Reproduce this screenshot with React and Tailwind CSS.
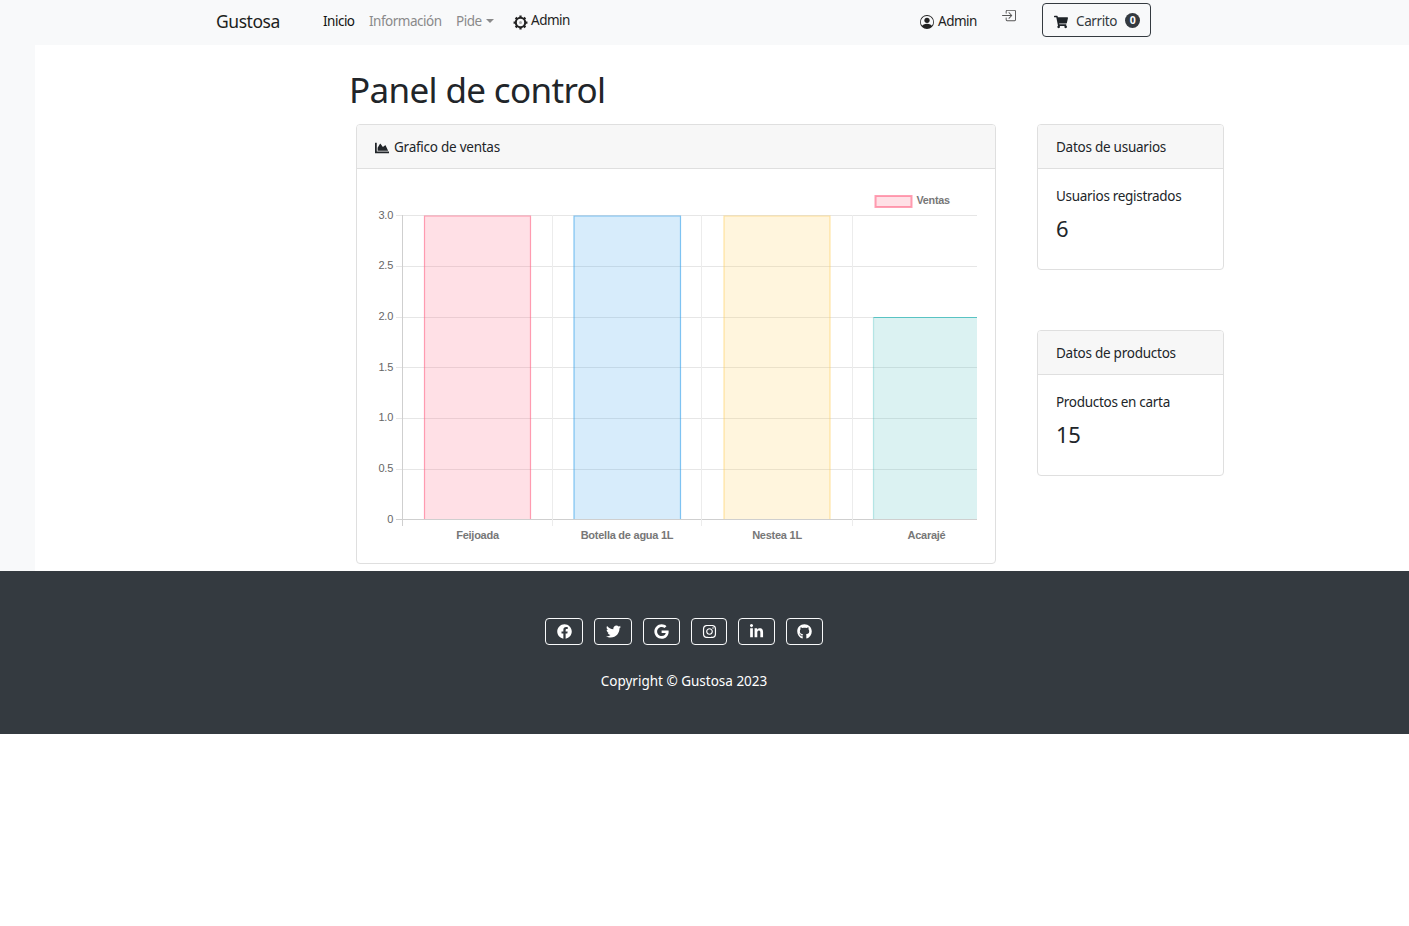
import { FaChartArea, FaShoppingCart, FaFacebook, FaTwitter, FaGoogle, FaInstagram, FaLinkedinIn, FaGithub } from 'react-icons/fa';
import { BsBoxArrowInRight, BsPersonCircle } from 'react-icons/bs';

const bars = [
  { x: 424.5, y: 216, h: 303, w: 106, fill: 'rgba(255,99,132,0.2)', line: 'rgba(255,99,132,0.6)', label: 'Feijoada', lx: 477.5 },
  { x: 574, y: 216, h: 303, w: 106.5, fill: 'rgba(54,162,235,0.2)', line: 'rgba(54,162,235,0.6)', label: 'Botella de agua 1L', lx: 627 },
  { x: 724, y: 216, h: 303, w: 106, fill: 'rgba(255,206,86,0.2)', line: 'rgba(255,206,86,0.5)', label: 'Nestea 1L', lx: 777 },
  { x: 873.5, y: 317.5, h: 201.5, w: 103.5, fill: 'rgba(75,192,192,0.2)', line: 'rgba(75,192,192,0.35)', top: 'rgba(75,192,192,0.9)', label: 'Acarajé', lx: 926.5 },
];

const yTicks = [
  { label: '3.0', y: 215.5, ty: 219 },
  { label: '2.5', y: 266.5, ty: 269 },
  { label: '2.0', y: 317.5, ty: 320 },
  { label: '1.5', y: 367.5, ty: 371 },
  { label: '1.0', y: 418.5, ty: 421 },
  { label: '0.5', y: 469.5, ty: 472 },
  { label: '0', y: 519.5, ty: 523 },
];

const xGrid = [552.5, 701.5, 852.5];

const chartFont = 'Liberation Sans, sans-serif';

// Coordinates in the chart are offset by the card body origin (357, 169)
const SalesChart = () => (
  <svg width="638" height="394" viewBox="357 169 638 394" className="block">
    <rect x="875.5" y="196" width="36" height="11" fill="rgba(255,99,132,0.2)" stroke="rgba(255,99,132,0.6)" strokeWidth="2" />
    <text x="916.5" y="204" fontSize="10.8" fontWeight="700" fill="#777" fontFamily={chartFont}>Ventas</text>

    {yTicks.map(t => (
      <g key={t.label}>
        <line x1="396" x2="977" y1={t.y} y2={t.y} stroke={t.label === '0' ? '#cfcfcf' : '#e6e6e6'} />
        <text x="393" y={t.ty} textAnchor="end" fontSize="11" fill="#666" fontFamily={chartFont}>{t.label}</text>
      </g>
    ))}
    <line x1="402.5" x2="402.5" y1="215" y2="526" stroke="#cfcfcf" />
    {xGrid.map(x => (
      <line key={x} x1={x} x2={x} y1="215" y2="526" stroke="#ececec" />
    ))}

    {bars.map(b => (
      <g key={b.label}>
        <rect x={b.x} y={b.y} width={b.w} height={b.h} fill={b.fill} />
        {b.top ? (
          <>
            <path d={`M${b.x} ${b.y + b.h}V${b.y}`} fill="none" stroke={b.line} strokeWidth="1.2" />
            <path d={`M${b.x} ${b.y}H${b.x + b.w}`} fill="none" stroke={b.top} strokeWidth="1.2" />
          </>
        ) : (
          <path d={`M${b.x} ${b.y + b.h}V${b.y}H${b.x + b.w}V${b.y + b.h}`} fill="none" stroke={b.line} strokeWidth="1.2" />
        )}
        <text x={b.lx} y="539" textAnchor="middle" fontSize="11" fontWeight="700" fill="#777" fontFamily={chartFont}>{b.label}</text>
      </g>
    ))}
  </svg>
);

// Ring with eight teeth, the solid cog icon has no open centre
const GearIcon = ({ className }) => (
  <svg width="15" height="15" viewBox="0 0 16 16" className={className}>
    <circle cx="8" cy="8" r="5" fill="none" stroke="currentColor" strokeWidth="2.2" />
    <circle cx="8" cy="8" r="1.6" fill="currentColor" opacity="0.35" />
    <g stroke="currentColor" strokeWidth="2.4">
      <path d="M8 .6v2.2M8 13.2v2.2M.6 8h2.2M13.2 8h2.2M2.8 2.8l1.5 1.5M11.7 11.7l1.5 1.5M13.2 2.8l-1.5 1.5M4.3 11.7l-1.5 1.5" />
    </g>
  </svg>
);

const StatCard = ({ title, label, value }) => (
  <div className="border border-[#dfdfdf] rounded bg-white overflow-hidden">
    <div className="h-[44px] px-[18px] pt-[2px] flex items-center bg-[#f7f7f7] border-b border-[#dfdfdf]">{title}</div>
    <div className="h-[100px] px-[18px] pt-[17px]">
      <p className="leading-[20px] tracking-[-0.3px]">{label}</p>
      <p className="text-[22px] leading-[30px] mt-[7px]">{value}</p>
    </div>
  </div>
);

const socials = [
  { Icon: FaFacebook, w: 'w-[38px]' },
  { Icon: FaTwitter, w: 'w-[38px]' },
  { Icon: FaGoogle, w: 'w-[37px]' },
  { Icon: FaInstagram, w: 'w-[36px]' },
  { Icon: FaLinkedinIn, w: 'w-[37px]' },
  { Icon: FaGithub, w: 'w-[37px]' },
];

export default function App() {
  return (
    <div className="min-h-[926px] bg-white text-[13.5px] text-[#212529] font-['Noto_Sans','Open_Sans',sans-serif] tracking-[-0.25px]">
      {/* Navbar */}
      <nav className="h-[45px] bg-[#f8f9fa] flex items-center pl-[216px] pb-[3px] tracking-[-0.5px]">
        <span className="text-[17.5px] w-[107px] text-[#1c1e20] tracking-[-0.45px] mt-[1px]">Gustosa</span>
        <span className="w-[46px] text-[#111]">Inicio</span>
        <span className="w-[87px] text-[#8a8a8a]">Información</span>
        <span className="w-[57px] flex items-center text-[#8a8a8a]">
          Pide
          <span className="ml-[4px] w-0 h-0 border-x-[4px] border-x-transparent border-t-[4px] border-t-[#8a8a8a]"></span>
        </span>
        <span className="flex items-center w-[407px] text-[#222]">
          <GearIcon className="mr-[3px] mt-[3px]" />
          <span className="-mt-[1px]">Admin</span>
        </span>
        <span className="flex items-center w-[82px] text-[#222]">
          <BsPersonCircle size={14} className="mr-[4px] mt-[1px]" />
          Admin
        </span>
        <BsBoxArrowInRight size={15} className="-mt-[12px] -ml-[1px] text-[#555]" />
        <span className="ml-[26px] w-[109px] h-[34px] border border-[#343a40] rounded flex items-center pl-[11px] text-[#343a40] -mt-[2px] tracking-[-0.4px]">
          <FaShoppingCart size={14} className="mr-[8px] mt-[3px] text-[#1e2328]" />
          <span className="mt-[2px]">Carrito</span>
          <span className="ml-[8px] mt-[1px] w-[15px] h-[15px] rounded-full bg-[#343a40] text-white text-[10.5px] font-bold flex items-center justify-center">0</span>
        </span>
      </nav>

      {/* Main */}
      <div className="flex h-[526px]">
        <div className="w-[35px] bg-[#f8f9fa]"></div>
        <main className="flex-1 pl-[314px]">
          <h1 className="text-[35px] tracking-[-0.65px] leading-[44px] mt-[23px] mb-[12px] text-[#212529]">Panel de control</h1>
          <div className="flex pl-[7px] gap-[41px]">
            <div className="w-[640px] h-[440px] border border-[#dfdfdf] rounded overflow-hidden">
              <div className="h-[44px] px-[18px] pt-[2px] flex items-center bg-[#f7f7f7] border-b border-[#dfdfdf]">
                <FaChartArea size={14} className="mr-[5px] text-[#212529]" />
                Grafico de ventas
              </div>
              <SalesChart />
            </div>
            <div className="w-[187px] flex flex-col gap-[60px]">
              <StatCard title="Datos de usuarios" label="Usuarios registrados" value="6" />
              <StatCard title="Datos de productos" label="Productos en carta" value="15" />
            </div>
          </div>
        </main>
      </div>

      {/* Footer */}
      <footer className="h-[163px] bg-[#343a40] text-white flex flex-col items-center pr-[41px] pt-[47px] tracking-normal">
        <div className="flex gap-[11px]">
          {socials.map(({ Icon, w }, i) => (
            <span key={i} className={`${w} h-[27px] border border-[#f8f9fa] rounded flex items-center justify-center`}>
              <Icon size={15} />
            </span>
          ))}
        </div>
        <p className="mt-[26px] leading-[20px]">Copyright © Gustosa 2023</p>
      </footer>
    </div>
  );
}
